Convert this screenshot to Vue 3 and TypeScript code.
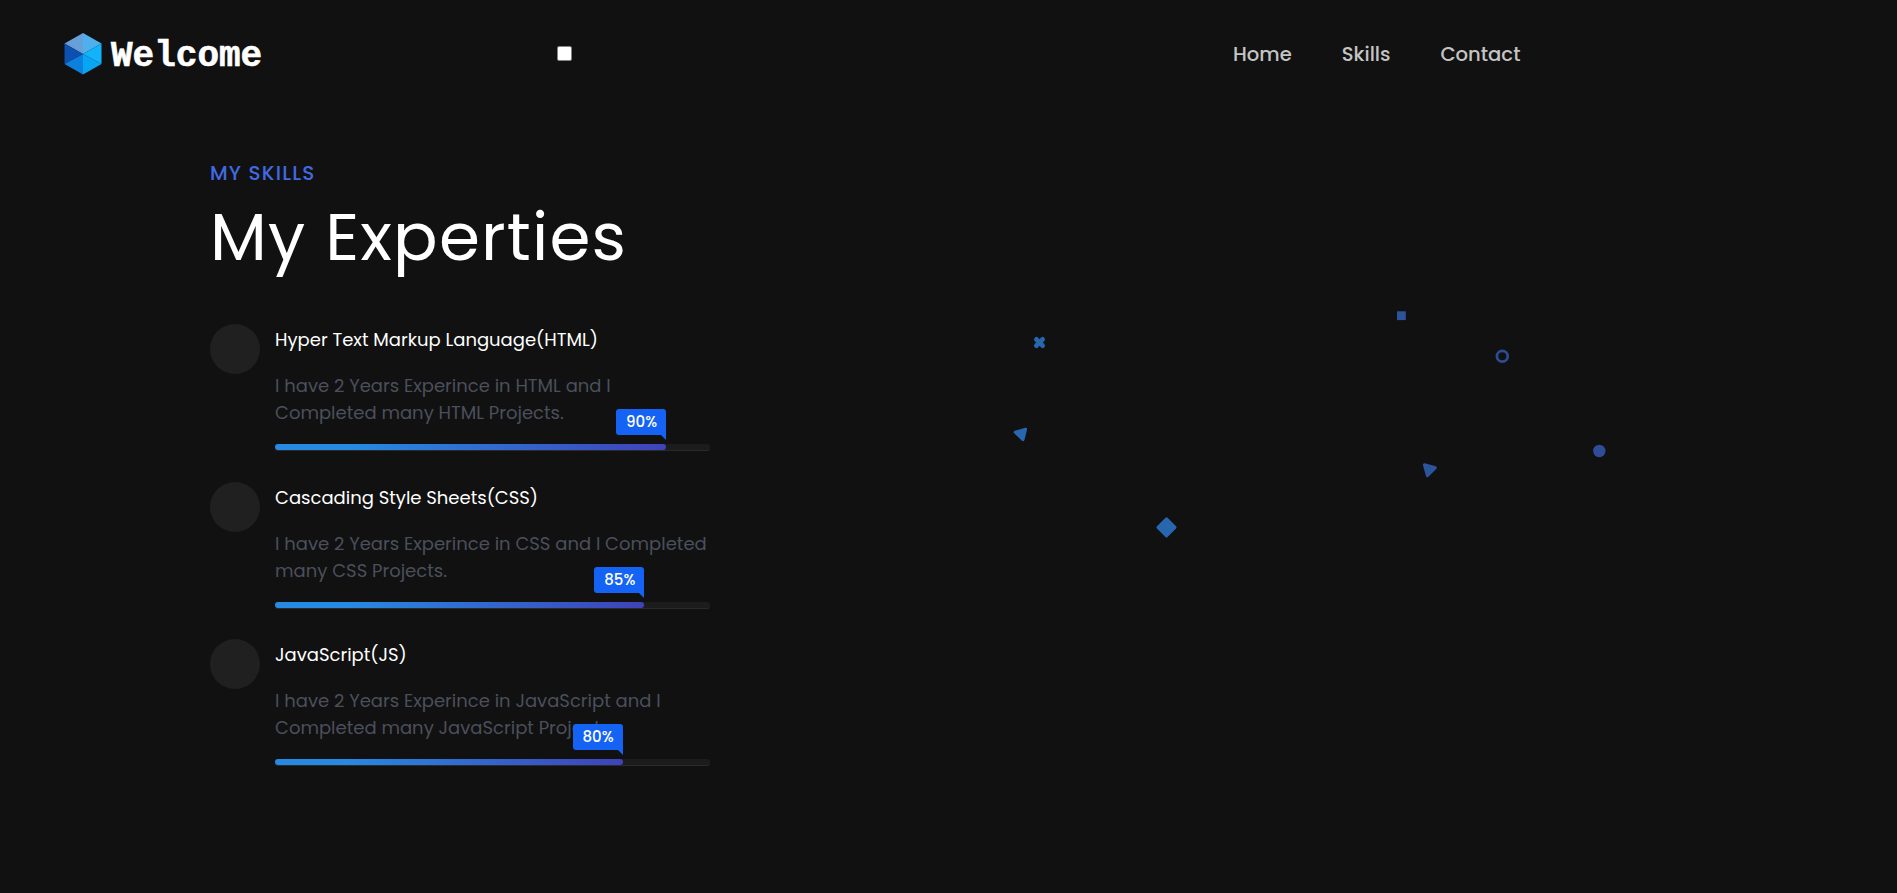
<script setup lang="ts">
interface Skill {
  name: string
  description: string
  percent: number
}

const links = ['Home', 'Skills', 'Contact']

const skills: Skill[] = [
  {
    name: 'Hyper Text Markup Language(HTML)',
    description: 'I have 2 Years Experince in HTML and I\nCompleted many HTML Projects.',
    percent: 90,
  },
  {
    name: 'Cascading Style Sheets(CSS)',
    description: 'I have 2 Years Experince in CSS and I Completed\nmany CSS Projects.',
    percent: 85,
  },
  {
    name: 'JavaScript(JS)',
    description: 'I have 2 Years Experince in JavaScript and I\nCompleted many JavaScript Projects.',
    percent: 80,
  },
]
</script>

<template>
  <div class="page">
    <header class="header">
      <a class="logo" href="#">
        <svg class="logo-mark" viewBox="0 0 38 42" aria-hidden="true">
          <path d="M19 0 37.5 10.5 19 21z" fill="#4fb0ee" />
          <path d="M19 0 .5 10.5 19 21z" fill="#689fd8" />
          <path d="M.5 10.5V31L19 21z" fill="#0d50b0" />
          <path d="M.5 31 19 41.5V21z" fill="#0c80dc" />
          <path d="M19 41.5 37.5 31 19 21z" fill="#08a5f4" />
          <path d="M37.5 10.5V31L19 21z" fill="#12b3fa" />
        </svg>
        <span class="logo-text">Welcome</span>
      </a>
      <input class="menu-toggle" type="checkbox" aria-label="Toggle menu" />
      <nav class="nav">
        <a v-for="link in links" :key="link" href="#" class="nav-link">{{ link }}</a>
      </nav>
    </header>

    <main class="skills">
      <section class="content">
        <p class="subtitle">MY SKILLS</p>
        <h1 class="title">My Experties</h1>

        <ul class="skill-list">
          <li v-for="skill in skills" :key="skill.name" class="skill">
            <div class="skill-icon"></div>
            <div class="skill-body">
              <h2 class="skill-name">{{ skill.name }}</h2>
              <p class="skill-text">{{ skill.description }}</p>
              <div class="bar">
                <div class="bar-fill" :style="{ width: skill.percent + '%' }">
                  <span class="bar-label">{{ skill.percent }}%</span>
                </div>
              </div>
            </div>
          </li>
        </ul>
      </section>

      <!-- Floating decorative shapes -->
      <svg class="shapes" viewBox="1000 300 640 260" aria-hidden="true">
        <path d="M1036.4 339.4l6.2 6.2M1042.6 339.4l-6.2 6.2" stroke="#2767b0" stroke-width="4.8" stroke-linecap="round" />
        <path d="M1015.2 432.2l10.4-3-2.6 10.4z" fill="#2767b0" stroke="#2767b0" stroke-width="3" stroke-linejoin="round" />
        <rect x="1397" y="311.3" width="8.8" height="8.8" fill="#2c549b" />
        <circle cx="1502.3" cy="356.2" r="5.4" fill="none" stroke="#2d4c96" stroke-width="2.7" />
        <circle cx="1599.3" cy="451" r="6.2" fill="#2f4c97" />
        <path d="M1424.4 464.8l11 2.8-8 8z" fill="#2b559c" stroke="#2b559c" stroke-width="3" stroke-linejoin="round" />
        <path d="M1166.5 518.9l8.5 8.5-8.5 8.5-8.5-8.5z" fill="#2767ae" stroke="#2767ae" stroke-width="3" stroke-linejoin="round" />
      </svg>
    </main>
  </div>
</template>

<style>
body {
  margin: 0;
  background: #111;
}
</style>

<style scoped>
.page {
  min-height: 893px;
  box-sizing: border-box;
  background: #111;
  color: #fff;
  font-family: "Poppins", "Inter", sans-serif;
  overflow: hidden;
}

.header {
  display: flex;
  align-items: center;
  height: 107px;
  padding-left: 64px;
}

.logo {
  display: flex;
  align-items: center;
  width: 493px;
  color: #fff;
  text-decoration: none;
}

.logo-mark {
  width: 38px;
  height: 42px;
  margin-right: 9px;
}

.logo-text {
  padding-top: 6px;
  font-family: "Courier New", "Liberation Mono", monospace;
  font-size: 36px;
  font-weight: 700;
  line-height: 40px;
  -webkit-text-stroke: 0.6px #fff;
}

.menu-toggle {
  appearance: none;
  width: 15px;
  height: 15px;
  margin: 0;
  box-sizing: border-box;
  background: #fff;
  border: 1px solid #858585;
  border-radius: 2px;
}

.nav {
  display: flex;
  gap: 50px;
  margin-left: 661px;
}

.nav-link {
  color: #c4c4c4;
  font-size: 19.6px;
  font-weight: 500;
  line-height: 30px;
  text-decoration: none;
}

.skills {
  display: flex;
  align-items: flex-start;
  padding: 51px 0 0 210px;
}

.content {
  width: 500px;
}

.subtitle {
  margin: 0;
  color: #4169e1;
  font-size: 20px;
  font-weight: 500;
  line-height: 30px;
  letter-spacing: 1.2px;
}

.title {
  margin: 9px 0 47px;
  font-size: 66px;
  font-weight: 400;
  line-height: 80px;
  letter-spacing: 1.2px;
  white-space: nowrap;
}

.skill-list {
  display: flex;
  flex-direction: column;
  gap: 30.5px;
  margin: 0;
  padding: 0;
  list-style: none;
}

.skill {
  display: flex;
  gap: 15px;
}

.skill-icon {
  flex: none;
  width: 50px;
  height: 50px;
  border-radius: 50%;
  background: #202020;
}

.skill-body {
  flex: 1;
  padding-top: 2px;
}

.skill-name {
  margin: 0 0 19px;
  font-size: 18px;
  font-weight: 400;
  line-height: 27px;
}

.skill-text {
  margin: 0 0 18px;
  color: #4b4f5c;
  font-size: 18px;
  line-height: 27px;
  white-space: pre-line;
}

.bar {
  height: 7px;
  box-sizing: border-box;
  padding-right: 0.5px;
  background: #1c1c1c;
  border-bottom: 1px solid #2b2b2b;
  border-radius: 3px;
}

.bar-fill {
  position: relative;
  height: 6px;
  border-radius: 3px;
  background: linear-gradient(90deg, #2689e2 20%, #3f43b8 100%);
}

.bar-label {
  position: absolute;
  right: 0;
  bottom: 15px;
  width: 50px;
  height: 26px;
  box-sizing: border-box;
  padding-left: 1px;
  border-radius: 3px 3px 0 3px;
  background: #1463f5;
  font-size: 15px;
  font-weight: 500;
  line-height: 26px;
  text-align: center;
}

.bar-label::after {
  content: "";
  position: absolute;
  right: 0;
  top: 100%;
  border-top: 5px solid #1463f5;
  border-left: 5px solid transparent;
}

.shapes {
  width: 640px;
  height: 260px;
  margin: 142px 0 0 290px;
}
</style>
